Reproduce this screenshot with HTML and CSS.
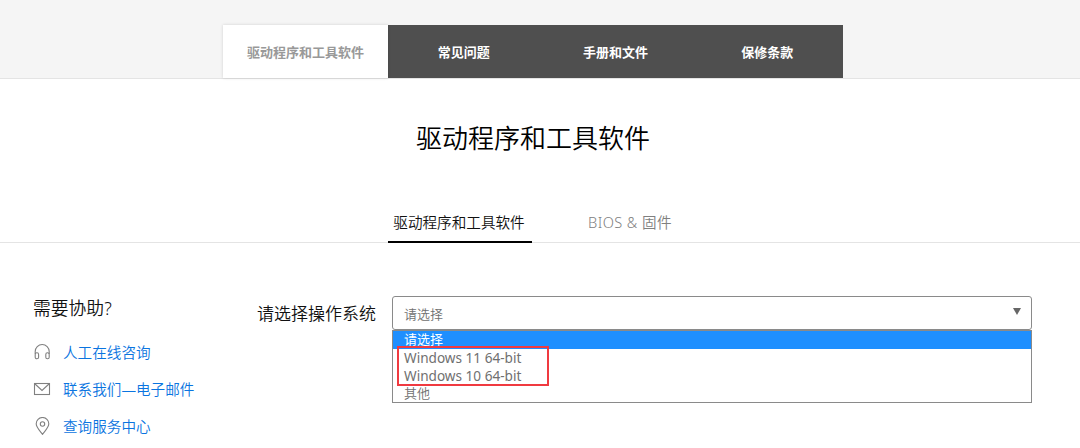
FILE: index.html
```html
<!DOCTYPE html>
<html lang="zh-CN">
<head>
    <meta charset="UTF-8">
    <meta name="viewport" content="width=device-width, initial-scale=1.0">
    <title>驱动程序和工具软件</title>
    <link rel="stylesheet" href="styles.css">
</head>
<body>
    <header class="top-bar">
        <nav class="main-tabs">
            <a class="main-tab active">驱动程序和工具软件</a>
            <a class="main-tab">常见问题</a>
            <a class="main-tab">手册和文件</a>
            <a class="main-tab">保修条款</a>
        </nav>
    </header>

    <h1>驱动程序和工具软件</h1>

    <nav class="sub-tabs">
        <a class="sub-tab active">驱动程序和工具软件</a>
        <a class="sub-tab">BIOS &amp; 固件</a>
    </nav>

    <main class="content">
        <aside class="help">
            <h2>需要协助?</h2>
            <ul>
                <li>
                    <svg width="18" height="18" viewBox="0 0 18 18">
                        <path d="M2.200 11V8.500a7 7 0 0 1 14 0V11"/>
                        <rect x="2.200" y="9.800" width="3.400" height="6" rx="1.600"/>
                        <rect x="12.800" y="9.800" width="3.400" height="6" rx="1.600"/>
                    </svg>
                    <a>人工在线咨询</a>
                </li>
                <li>
                    <svg width="18" height="18" viewBox="0 0 18 18">
                        <rect x="1.500" y="3.500" width="15" height="11"/>
                        <path d="M1.500 3.500l7.500 7 7.500-7"/>
                    </svg>
                    <a>联系我们—电子邮件</a>
                </li>
                <li>
                    <svg width="18" height="18" viewBox="0 0 18 18">
                        <path d="M9.500 17.300C7 14 3.200 10.400 3.200 6.800a6.300 6.300 0 0 1 12.600 0C15.800 10.400 12 14 9.500 17.300z"/>
                        <circle cx="9.500" cy="7" r="2.200"/>
                    </svg>
                    <a>查询服务中心</a>
                </li>
            </ul>
        </aside>

        <label class="os-label">请选择操作系统</label>

        <div class="os-select">
            <div class="select-box">
                <span>请选择</span>
                <svg width="8" height="7" viewBox="0 0 8 7"><path d="M0 0h8L4 7z"/></svg>
            </div>
            <ul class="options">
                <li class="selected">请选择</li>
                <li class="windows">Windows 11 64-bit</li>
                <li class="windows">Windows 10 64-bit</li>
                <li>其他</li>
            </ul>
            <div class="highlight"></div>
        </div>
    </main>
</body>
</html>
```

FILE: styles.css
```css
* {
    box-sizing: border-box;
}

body {
    font-family: "Noto Sans", "Noto Sans CJK SC", sans-serif;
    font-weight: 350;
    margin: 0;
    height: 448px;
    overflow: hidden;
    background-color: #fff;
    color: #111;
}

ul {
    list-style: none;
    margin: 0;
    padding: 0;
}

.top-bar {
    height: 79px;
    padding: 25px 14px 0 0;
    background-color: #f5f5f5;
    border-bottom: 1px solid #e4e4e4;
}

.main-tabs {
    display: flex;
    width: 620px;
    height: 53px;
    margin: 0 auto;
    background-color: #4f4f4f;
}

.main-tab {
    flex: 1;
    font-size: 13px;
    font-weight: bold;
    line-height: 54px;
    text-align: center;
    color: #fff;
}

.main-tab.active {
    flex: 0 0 165px;
    background-color: #fff;
    color: #999;
    box-shadow: 0 0 3px rgba(0, 0, 0, 0.15);
}

h1 {
    margin: 38px 14px 0 0;
    font-size: 26px;
    font-weight: 350;
    line-height: 42px;
    text-align: center;
    color: #000;
}

.sub-tabs {
    display: flex;
    justify-content: center;
    gap: 50px;
    height: 84px;
    padding: 45px 14px 0 0;
    border-bottom: 1px solid #e4e4e4;
}

.sub-tab {
    width: 144px;
    height: 39px;
    font-size: 14.6px;
    line-height: 36px;
    text-align: center;
    color: #808080;
}

.sub-tab.active {
    padding-right: 2px;
    color: #111;
    border-bottom: 2px solid #000;
}

.sub-tab:last-child {
    width: 96px;
    letter-spacing: 0.4px;
}

.content {
    display: flex;
    padding: 53px 0 0 33px;
}

.help {
    width: 224px;
}

.help h2 {
    margin: -1px 0 12px;
    font-size: 17.8px;
    font-weight: 350;
    line-height: 26px;
    color: #111;
}

.help li {
    display: flex;
    align-items: center;
    gap: 12px;
    height: 37px;
    font-size: 14.6px;
    color: #0a74e0;
}

.help svg {
    fill: none;
    stroke: #808080;
    stroke-width: 1.1;
}

.os-label {
    width: 135px;
    padding-top: 5px;
    font-size: 17px;
    line-height: 26px;
}

.os-select {
    position: relative;
    width: 640px;
    font-size: 13px;
    color: #707070;
}

.select-box {
    display: flex;
    align-items: center;
    justify-content: space-between;
    height: 34px;
    padding: 0 10px 0 11px;
    border: 1px solid #8a8a8a;
    border-radius: 3px;
}

.select-box svg {
    margin-top: -3px;
    fill: #666;
}

.options {
    height: 73px;
    border: 1px solid #8a8a8a;
}

.options li {
    height: 18px;
    padding-left: 11px;
    line-height: 17px;
}

.options .windows {
    font-size: 13.6px;
    font-weight: 400;
    line-height: 17px;
}

.options .selected {
    background-color: #1e8fff;
    color: #fff;
    font-weight: 400;
}

.highlight {
    position: absolute;
    left: 5px;
    top: 50px;
    width: 152px;
    height: 40px;
    border: 2px solid #f03a40;
}
```
